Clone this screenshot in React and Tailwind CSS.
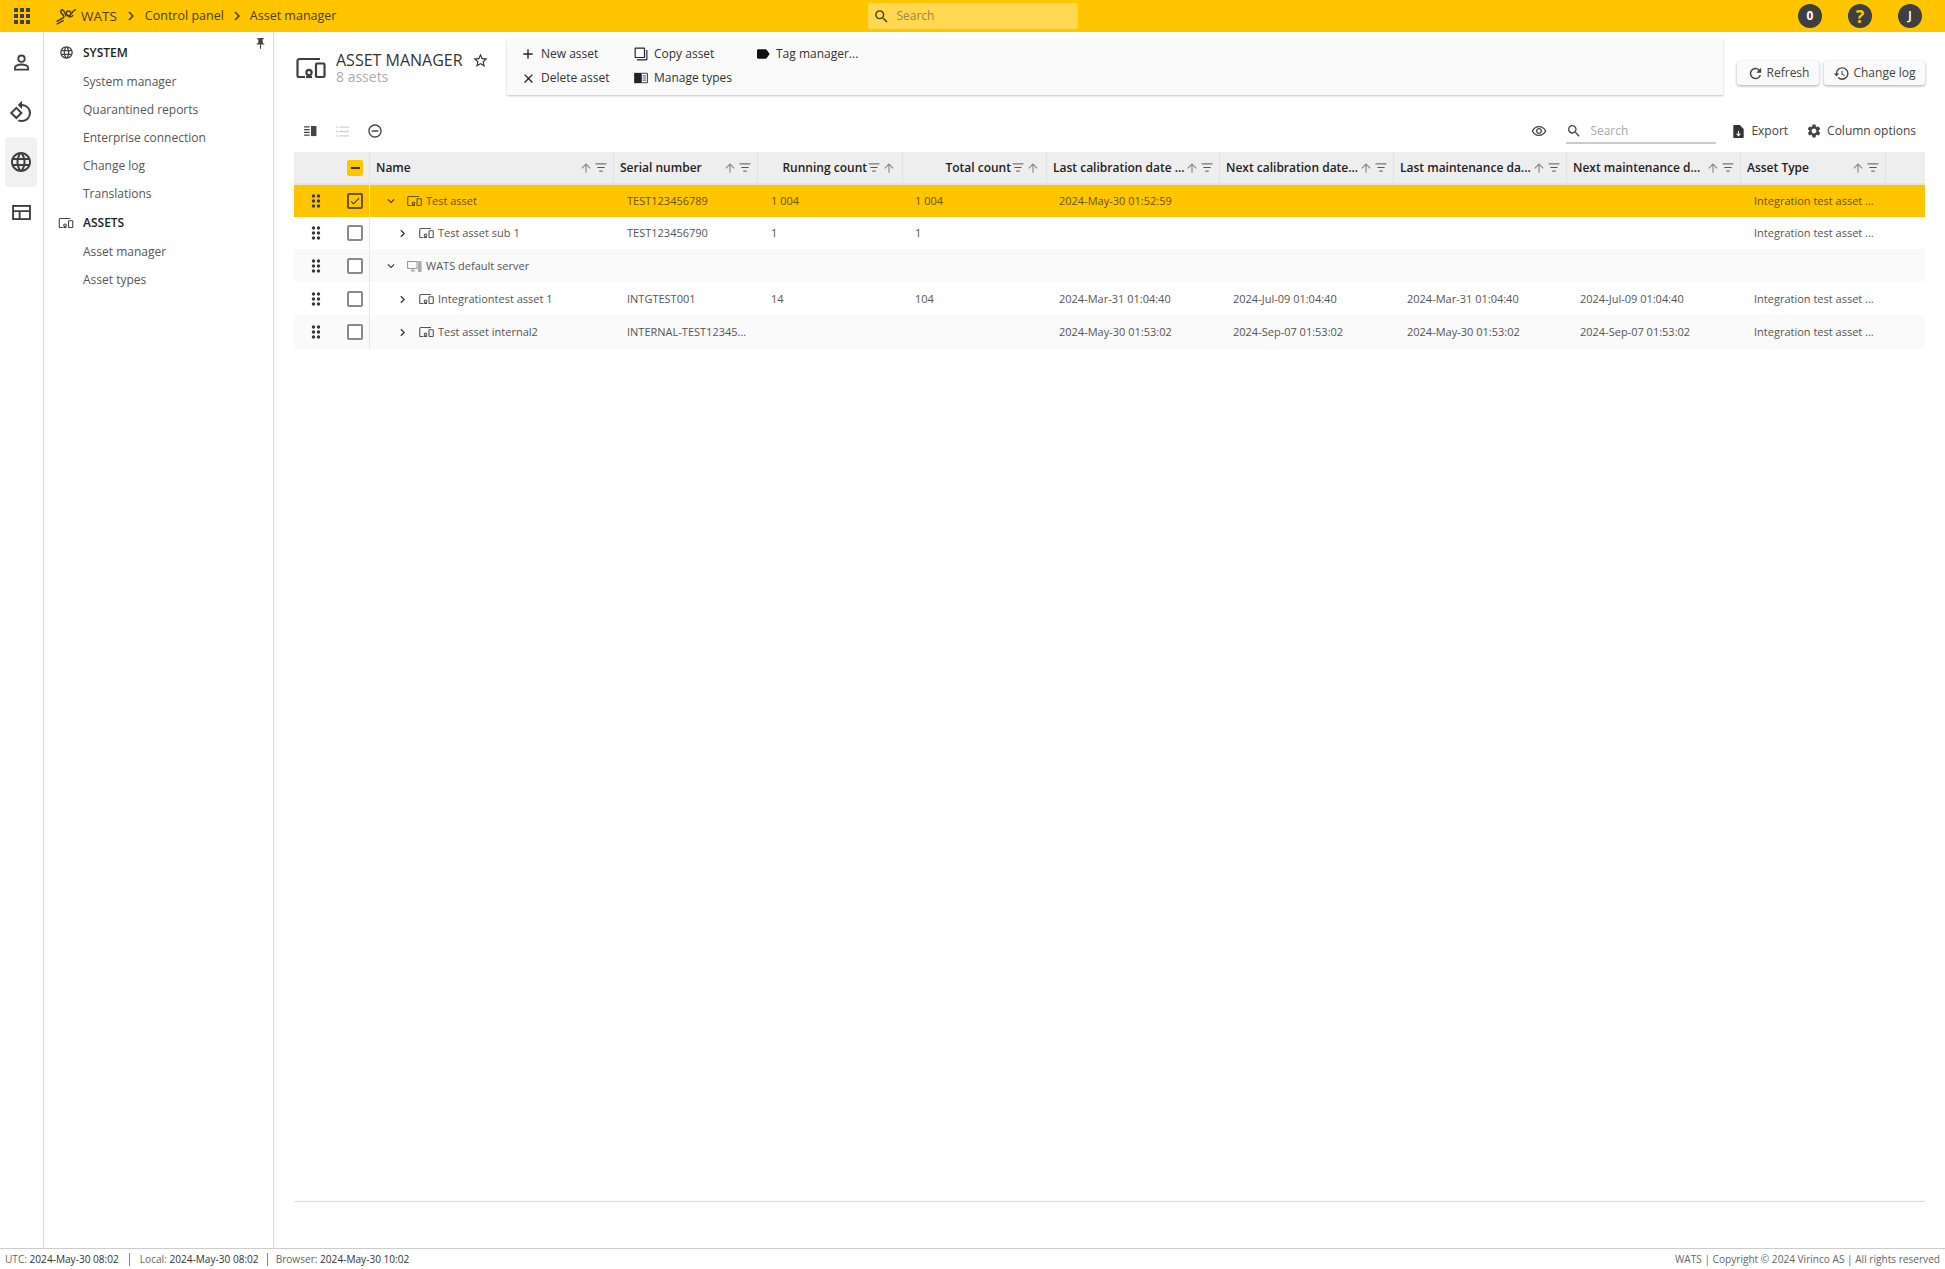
import React from "react";
import {
  MdApps, MdChevronRight, MdExpandMore, MdOutlineRotate90DegreesCcw, MdLanguage, MdPushPin, MdStarBorder,
  MdAdd, MdClose, MdLabel, MdRefresh, MdHistory, MdSearch, MdSettings, MdArrowUpward, MdDragIndicator,
  MdRemoveCircleOutline, MdOutlineRemoveRedEye, MdOutlineFilterNone, MdCheck,
} from "react-icons/md";

const font = { fontFamily: '"Open Sans", sans-serif' };

function Devices({ className }) {
  return (
    <svg viewBox="0 0 30 24" className={className} fill="none" stroke="currentColor" strokeWidth="2.2">
      <path d="M9 21H2.500a1 1 0 0 1-1-1V5a2 2 0 0 1 2-2H24" />
      <circle cx="13" cy="16.500" r="2.600" />
      <path d="M10 21h6" />
      <rect x="20" y="7.500" width="8.500" height="13.500" rx="1" />
    </svg>
  );
}

function Server({ className }) {
  return (
    <svg viewBox="0 0 24 20" className={className} fill="none" stroke="currentColor" strokeWidth="1.4">
      <rect x="1" y="2" width="15" height="11" />
      <path d="M6 17h7M9 13v4" />
      <rect x="18.500" y="2" width="4" height="16" fill="currentColor" opacity=".7" />
    </svg>
  );
}

function Logo() {
  return (
    <svg viewBox="0 0 20 16" className="h-[17px] w-[21px] text-[#4a3f10]" fill="none" stroke="currentColor" strokeWidth="1.400" strokeLinecap="round">
      <path d="M5 2c-2 2 1 3 2 5s0 3-2 3" />
      <path d="M5.500 1.500c3 0 3 4 4 6" />
      <path d="M1 15l6-3M1 12.500l4-2" />
      <circle cx="12" cy="5" r="2.200" />
      <path d="M15 5c1-2 2-3 3.500-3.500M12 8c2 1 3 0 4-1" />
    </svg>
  );
}

function RailUser() {
  return (
    <svg viewBox="0 0 18 18" className="h-[17px] w-[17px]" fill="none" stroke="currentColor" strokeWidth="1.900">
      <circle cx="9" cy="5" r="3.400" />
      <path d="M2 16.500v-2c0-2 3.500-3.400 7-3.400s7 1.400 7 3.400v2z" />
    </svg>
  );
}

function RailLayout() {
  return (
    <svg viewBox="0 0 20 16" className="h-[15px] w-[19px]" fill="none" stroke="currentColor" strokeWidth="2">
      <rect x="1" y="1" width="18" height="14" />
      <path d="M1 6.500h18M8 6.500V15" />
    </svg>
  );
}

function BookIcon() {
  return (
    <svg viewBox="0 0 16 14" className="h-[12px] w-[14px] text-[#222]">
      <path d="M0 1h8v12H0z" fill="currentColor" />
      <path d="M8.500 1.500h7v11h-7z" fill="none" stroke="currentColor" />
      <path d="M10 4.500h4M10 7h4M10 9.500h4" stroke="currentColor" strokeWidth=".9" />
    </svg>
  );
}

function ColsIcon() {
  return (
    <svg viewBox="0 0 14 12" className="h-[11px] w-[13px] text-[#444]">
      <path d="M0 1h6M0 4h6M0 7h6M0 10h6" stroke="currentColor" strokeWidth="1.500" />
      <rect x="7.500" y="0" width="6" height="11" fill="currentColor" />
    </svg>
  );
}

function ListIcon() {
  return (
    <svg viewBox="0 0 14 12" className="h-[11px] w-[13px] text-[#cfcfcf]">
      <path d="M3.500 1.200H14M3.500 6H14M3.500 10.800H14M0 1.200h2M0 6h2M0 10.800h2" stroke="currentColor" strokeWidth="1.500" />
    </svg>
  );
}

function ExportIcon() {
  return (
    <svg viewBox="0 0 12 15" className="h-[13px] w-[11px] text-[#333]">
      <path d="M0 1.200C0 .5.500 0 1.200 0H7.500L12 4.500v9.300c0 .7-.5 1.200-1.200 1.200H1.200C.5 15 0 14.500 0 13.800z" fill="currentColor" />
      <path d="M6 7v5M3.800 10 6 12.500 8.200 10" stroke="#fff" strokeWidth="1.200" fill="none" />
    </svg>
  );
}

function Head({ title, w, right }) {
  const sort = <MdArrowUpward className="h-[14px] w-[14px] shrink-0 text-[#888]" />;
  const filter = (
    <svg viewBox="0 0 12 10" className="h-[9px] w-[12px] shrink-0 text-[#555]">
      <path d="M0 1h12M2 5h8M4 9h4" stroke="currentColor" strokeWidth="1.100" />
    </svg>
  );
  return (
    <div className={`${w} flex h-full shrink-0 items-center border-r border-[#e2e2e2] pl-[6px] pr-[6px] text-[12px] font-semibold text-[#222]`}>
      {right ? (
        <>
          <span className="flex-1 whitespace-nowrap text-right">{title}</span>
          <span className="ml-[1px] flex items-center gap-[2px]">{filter}{sort}</span>
        </>
      ) : (
        <>
          <span className="flex-1 whitespace-nowrap">{title}</span>
          <span className="flex items-center gap-[2px]">{sort}{filter}</span>
        </>
      )}
    </div>
  );
}

const cellClasses = [
  "w-[144px] pl-[13px]", "w-[145px] pl-[13px]", "w-[144px] pl-[12px]", "w-[173px] pl-[12px]",
  "w-[174px] pl-[13px]", "w-[173px] pl-[13px]", "w-[174px] pl-[13px]", "w-[145px] pl-[13px]",
];

const rows = [
  { name: "Test asset", level: 0, open: true, sel: true, cells: ["TEST123456789", "1 004", "1 004", "2024-May-30 01:52:59", "", "", "", "Integration test asset ..."], h: "h-[32px]" },
  { name: "Test asset sub 1", level: 1, cells: ["TEST123456790", "1", "1", "", "", "", "", "Integration test asset ..."], h: "h-[32px]" },
  { name: "WATS default server", level: 0, open: true, server: true, alt: true, cells: ["", "", "", "", "", "", "", ""], h: "h-[33px] pt-[1px]" },
  { name: "Integrationtest asset 1", level: 1, cells: ["INTGTEST001", "14", "104", "2024-Mar-31 01:04:40", "2024-Jul-09 01:04:40", "2024-Mar-31 01:04:40", "2024-Jul-09 01:04:40", "Integration test asset ..."], h: "h-[33px] pt-[1px]" },
  { name: "Test asset internal2", level: 1, alt: true, cells: ["INTERNAL-TEST12345...", "", "", "2024-May-30 01:53:02", "2024-Sep-07 01:53:02", "2024-May-30 01:53:02", "2024-Sep-07 01:53:02", "Integration test asset ..."], h: "h-[34px]" },
];

function Row({ r }) {
  const bg = r.sel ? "bg-[#ffc600] text-[#6b5400]" : r.alt ? "bg-[#fafafa] text-[#555]" : "bg-white text-[#555]";
  return (
    <div className={`flex ${r.h} items-center text-[11px] ${bg}`}>
      <div className="flex h-full w-[76px] shrink-0 items-center border-r border-[#e6e6e6]">
        <div className="flex w-[44px] justify-center">
          <MdDragIndicator className="h-[20px] w-[20px] text-[#3a3a3a]" />
        </div>
        <div className={`ml-[9px] flex h-[16px] w-[16px] items-center justify-center rounded-[2px] border-2 ${r.sel ? "border-[#6b5400]" : "border-[#8a8a8a] bg-white"}`}>
          {r.sel && <MdCheck className="h-[14px] w-[14px] text-[#4a3a00]" />}
        </div>
      </div>
      <div className={`flex w-[244px] shrink-0 items-center ${r.level ? "pl-[25px]" : "pl-[14px]"}`}>
        {r.open ? (
          <MdExpandMore className={`h-[14px] w-[14px] ${r.sel ? "text-[#4a3a00]" : "text-[#333]"}`} />
        ) : (
          <MdChevronRight className="h-[15px] w-[15px] text-[#333]" />
        )}
        {r.server ? (
          <Server className="ml-[9px] h-[13px] w-[15px] text-[#888]" />
        ) : (
          <Devices className={`ml-[9px] h-[12px] w-[15px] ${r.sel ? "text-[#6b5400]" : "text-[#555]"}`} />
        )}
        <span className="ml-[4px] whitespace-nowrap">{r.name}</span>
      </div>
      {r.cells.map((c, i) => (
        <div key={i} className={`${cellClasses[i]} shrink-0 whitespace-nowrap`}>{c}</div>
      ))}
    </div>
  );
}

function ActionBtn({ icon, label }) {
  return (
    <div className="flex h-[24px] items-center whitespace-nowrap">
      <span className="flex w-[28px] shrink-0 items-center justify-center">{icon}</span>
      <span className="ml-[-1px]">{label}</span>
    </div>
  );
}

function NavItem({ children }) {
  return <div className="flex h-[28px] items-center pl-[39px] text-[12px] text-[#555]">{children}</div>;
}

function NavHead({ icon, children }) {
  return (
    <div className="flex h-[29px] items-center text-[12px] font-semibold text-[#222]">
      <span className="flex w-[39px] justify-center pl-[5px]">{icon}</span>
      {children}
    </div>
  );
}

export default function App() {
  return (
    <div className="flex h-screen w-full flex-col overflow-hidden bg-white text-[#333]" style={font}>
      {/* top bar */}
      <div className="flex h-[32px] shrink-0 items-center bg-[#ffc600] text-[12.5px] text-[#4a3f10]">
        <div className="flex w-[43px] justify-center">
          <MdApps className="h-[24px] w-[24px] text-[#3f3f3f]" />
        </div>
        <div className="ml-[13px] flex items-center">
          <Logo />
          <span className="ml-[4px] text-[13.5px]">WATS</span>
          <MdChevronRight className="mx-[5px] h-[18px] w-[18px]" />
          <span>Control panel</span>
          <MdChevronRight className="mx-[4px] h-[18px] w-[18px]" />
          <span>Asset manager</span>
        </div>
        <div className="ml-[532px] flex h-[26px] w-[210px] items-center rounded-[3px] bg-[#ffd84f] pl-[5px] text-[12px] text-[#9a8a40]">
          <MdSearch className="h-[17px] w-[17px] text-[#4a3f10]" />
          <span className="ml-[6px]">Search</span>
        </div>
        <div className="ml-auto mr-[23px] flex items-center gap-[26px]">
          <div className="flex h-[24px] w-[24px] items-center justify-center rounded-full bg-[#3f3f3f] text-[12px] font-bold text-white">0</div>
          <div className="flex h-[24px] w-[24px] items-center justify-center rounded-full bg-[#3f3f3f] text-[18px] font-bold text-[#ffc600]">?</div>
          <div className="flex h-[24px] w-[24px] items-center justify-center rounded-full bg-[#3f3f3f] text-[13px] font-semibold text-white">J</div>
        </div>
      </div>

      {/* body */}
      <div className="flex min-h-0 flex-1">
        {/* rail */}
        <div className="flex w-[44px] shrink-0 flex-col items-center border-r border-[#ddd] pr-[1px] pt-[5px] text-[#3f3f3f]">
          <div className="flex h-[50px] w-[32px] items-center justify-center"><RailUser /></div>
          <div className="flex h-[50px] w-[32px] items-center justify-center"><MdOutlineRotate90DegreesCcw className="h-[24px] w-[24px]" /></div>
          <div className="flex h-[50px] w-[32px] items-center justify-center rounded-[4px] bg-[#f1f1f1]"><MdLanguage className="h-[24px] w-[24px]" /></div>
          <div className="flex h-[50px] w-[32px] items-center justify-center"><RailLayout /></div>
        </div>

        {/* sidebar */}
        <div className="relative w-[230px] shrink-0 border-r border-[#ddd] pt-[6px]">
          <MdPushPin className="absolute right-[6px] top-[5px] h-[13px] w-[13px] text-[#444]" />
          <NavHead icon={<MdLanguage className="h-[15px] w-[15px] text-[#444]" />}>SYSTEM</NavHead>
          <div className="pt-[1px]">
            <NavItem>System manager</NavItem>
            <NavItem>Quarantined reports</NavItem>
            <NavItem>Enterprise connection</NavItem>
            <NavItem>Change log</NavItem>
            <NavItem>Translations</NavItem>
          </div>
          <NavHead icon={<Devices className="h-[12px] w-[16px] text-[#444]" />}>ASSETS</NavHead>
          <div className="pt-[1px]">
            <NavItem>Asset manager</NavItem>
            <NavItem>Asset types</NavItem>
          </div>
        </div>

        {/* main */}
        <div className="flex min-w-0 flex-1 flex-col px-[20px]">
          {/* header */}
          <div className="flex items-end pt-[7px]">
            <div className="flex h-[56px] w-[213px] shrink-0 items-start pl-[2px] pt-[11px]">
              <Devices className="mt-[6px] h-[24px] w-[30px] text-[#3f3f3f]" />
              <div className="ml-[10px]">
                <div className="flex items-center">
                  <span className="text-[16px] leading-[20px] text-[#333]">ASSET MANAGER</span>
                  <MdStarBorder className="ml-[9px] h-[17px] w-[17px] text-[#333]" />
                </div>
                <div className="text-[14px] leading-[13px] text-[#aaa]">8 assets</div>
              </div>
            </div>
            <div className="flex h-[56px] w-[1216px] shrink-0 items-start bg-[#fafafa] pl-[7px] pt-[3px] text-[12px] text-[#333] shadow-[0_1px_2px_rgba(0,0,0,0.25)]">
              <div className="w-[113px]">
                <ActionBtn icon={<MdAdd className="h-[16px] w-[16px] text-[#222]" />} label="New asset" />
                <ActionBtn icon={<MdClose className="h-[15px] w-[15px] text-[#222]" />} label="Delete asset" />
              </div>
              <div className="w-[122px]">
                <ActionBtn icon={<MdOutlineFilterNone className="h-[14px] w-[14px] -scale-x-100 text-[#222]" />} label="Copy asset" />
                <ActionBtn icon={<BookIcon />} label="Manage types" />
              </div>
              <ActionBtn icon={<MdLabel className="h-[16px] w-[16px] text-[#111]" />} label="Tag manager..." />
            </div>
            <div className="mb-[10px] ml-auto flex gap-[5px] text-[12px] text-[#444]">
              <div className="flex h-[24px] w-[82px] items-center justify-center rounded-[3px] bg-[#fafafa] shadow-[0_1px_3px_rgba(0,0,0,0.35)]">
                <MdRefresh className="mr-[3px] h-[17px] w-[17px]" />Refresh
              </div>
              <div className="flex h-[24px] w-[101px] items-center justify-center rounded-[3px] bg-[#fafafa] shadow-[0_1px_3px_rgba(0,0,0,0.35)]">
                <MdHistory className="mr-[3px] h-[17px] w-[17px]" />Change log
              </div>
            </div>
          </div>

          {/* table toolbar */}
          <div className="mt-[22px] flex h-[28px] items-center text-[12px] text-[#444]">
            <div className="ml-[10px]"><ColsIcon /></div>
            <div className="ml-[19px]"><ListIcon /></div>
            <MdRemoveCircleOutline className="ml-[18px] h-[16px] w-[16px] text-[#444]" />
            <div className="ml-auto flex items-center">
              <MdOutlineRemoveRedEye className="h-[16px] w-[16px] text-[#444]" />
              <div className="ml-[19px] flex h-[26px] w-[150px] items-center border-b-2 border-[#ccc] pt-[2px] text-[#aaa]">
                <MdSearch className="h-[16px] w-[16px] text-[#444]" />
                <span className="ml-[8px]">Search</span>
              </div>
              <span className="ml-[17px]"><ExportIcon /></span>
              <span className="ml-[7px]">Export</span>
              <MdSettings className="ml-[18px] h-[16px] w-[16px]" />
              <span className="ml-[5px] mr-[9px]">Column options</span>
            </div>
          </div>

          {/* table */}
          <div className="mt-[7px] flex min-h-0 flex-1 flex-col border-b border-[#ddd]">
            <div className="flex h-[33px] shrink-0 items-center border-b-2 border-[#e4e4e4] bg-[#eee]">
              <div className="h-full w-[76px] shrink-0 border-r border-[#e2e2e2]">
                <div className="ml-[53px] mt-[8px] flex h-[16px] w-[16px] items-center justify-center rounded-[2px] bg-[#ffc600]">
                  <div className="h-[2px] w-[9px] bg-[#3a3000]" />
                </div>
              </div>
              <Head title="Name" w="w-[244px]" />
              <Head title="Serial number" w="w-[144px]" />
              <Head title="Running count" w="w-[145px]" right />
              <Head title="Total count" w="w-[144px]" right />
              <Head title="Last calibration date ..." w="w-[173px]" />
              <Head title="Next calibration date..." w="w-[174px]" />
              <Head title="Last maintenance da..." w="w-[173px]" />
              <Head title="Next maintenance d..." w="w-[174px]" />
              <Head title="Asset Type" w="w-[145px]" />
            </div>
            {rows.map((r) => <Row key={r.name} r={r} />)}
          </div>
          <div className="h-[46px] shrink-0" />
        </div>
      </div>

      {/* footer */}
      <div className="flex h-[21px] shrink-0 items-center border-t border-[#ccc] px-[5px] pt-[1px] text-[10.1px] text-[#666]">
        <span>UTC: <span className="text-[#333]">2024-May-30 08:02</span></span>
        <span className="mx-[10px] h-[13px] border-l border-[#888]" />
        <span>Local: <span className="text-[#333]">2024-May-30 08:02</span></span>
        <span className="mx-[8px] h-[13px] border-l border-[#888]" />
        <span>Browser: <span className="text-[#333]">2024-May-30 10:02</span></span>
        <span className="ml-auto">WATS | Copyright © 2024 Virinco AS | All rights reserved</span>
      </div>
    </div>
  );
}
